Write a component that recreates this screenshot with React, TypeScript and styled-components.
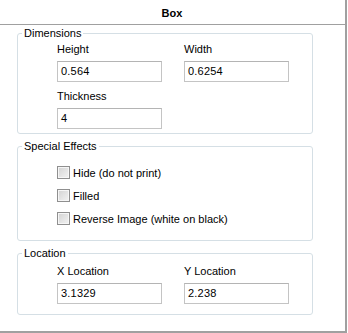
import React from "react";
import styled, { createGlobalStyle } from "styled-components";

const Global = createGlobalStyle`
  html, body { margin: 0; padding: 0; background: #ffffff; }
  body { font-family: "Liberation Sans", Arial, sans-serif; font-size: 11px; color: #000; }
`;

const Panel = styled.div`
  width: 345px;
  height: 331px;
  border-right: 2px solid #a0a0a0;
  border-bottom: 2px solid #a0a0a0;
  background: #ffffff;
  display: flex;
  flex-direction: column;
`;

const Header = styled.div`
  height: 24px;
  border-bottom: 1px solid #a0a0a0;
  display: flex;
  align-items: center;
  justify-content: center;
`;

const Title = styled.span`
  font-weight: bold;
  font-size: 11px;
  line-height: 13px;
  margin-top: 2px;
  margin-left: -1px;
`;

const Body = styled.div`
  padding-left: 17px;
  display: flex;
  flex-direction: column;
`;

const Group = styled.fieldset<{ $mt: number; $pt: number; $pb: number }>`
  box-sizing: border-box;
  width: 296px;
  margin: ${(p) => p.$mt}px 0 0 0;
  padding: ${(p) => p.$pt}px 0 ${(p) => p.$pb}px 0;
  border: 1px solid #d5dfe5;
  border-radius: 3px;
  min-width: 0;
`;

const Legend = styled.legend`
  margin-left: 4px;
  padding: 0 2px;
  font-size: 11px;
  line-height: 13px;
`;

const FieldGrid = styled.div`
  display: grid;
  grid-template-columns: 105px 105px;
  column-gap: 22px;
  row-gap: 8px;
  padding-left: 39px;
`;

const Field = styled.div`
  display: flex;
  flex-direction: column;
  gap: 5px;
`;

const Label = styled.span`
  font-size: 11px;
  line-height: 13px;
`;

const Input = styled.div`
  box-sizing: border-box;
  width: 105px;
  height: 21px;
  border: 1px solid #c4c4c4;
  border-top-color: #b4b4b4;
  background: #fff;
  padding: 0 3px;
  font-size: 11px;
  line-height: 19px;
  letter-spacing: 0.2px;
`;

const CheckList = styled.div`
  display: flex;
  flex-direction: column;
  gap: 10px;
  padding-left: 39px;
`;

const CheckRow = styled.label`
  display: flex;
  align-items: center;
  gap: 3px;
  height: 13px;
  font-size: 11px;
  line-height: 13px;
`;

const Box = styled.span`
  box-sizing: border-box;
  width: 13px;
  height: 13px;
  border: 1px solid #8f8f8f;
  background: linear-gradient(135deg, #d2d2d2 0%, #e6e6e6 60%, #f2f2f2 100%);
  box-shadow: inset 0 0 0 1px #f6f6f6;
`;

const CheckText = styled.span`
  margin-top: 1px;
`;

export default function App() {
  return (
    <>
      <Global />
      <Panel>
        <Header>
          <Title>Box</Title>
        </Header>
        <Body>
          <Group $mt={2} $pt={3} $pb={4}>
            <Legend>Dimensions</Legend>
            <FieldGrid>
              <Field>
                <Label>Height</Label>
                <Input>0.564</Input>
              </Field>
              <Field>
                <Label>Width</Label>
                <Input>0.6254</Input>
              </Field>
              <Field>
                <Label>Thickness</Label>
                <Input>4</Input>
              </Field>
            </FieldGrid>
          </Group>
          <Group $mt={6} $pt={13} $pb={15}>
            <Legend>Special Effects</Legend>
            <CheckList>
              <CheckRow>
                <Box />
                <CheckText>Hide (do not print)</CheckText>
              </CheckRow>
              <CheckRow>
                <Box />
                <CheckText>Filled</CheckText>
              </CheckRow>
              <CheckRow>
                <Box />
                <CheckText>Reverse Image (white on black)</CheckText>
              </CheckRow>
            </CheckList>
          </Group>
          <Group $mt={6} $pt={5} $pb={10}>
            <Legend>Location</Legend>
            <FieldGrid>
              <Field>
                <Label>X Location</Label>
                <Input>3.1329</Input>
              </Field>
              <Field>
                <Label>Y Location</Label>
                <Input>2.238</Input>
              </Field>
            </FieldGrid>
          </Group>
        </Body>
      </Panel>
    </>
  );
}
